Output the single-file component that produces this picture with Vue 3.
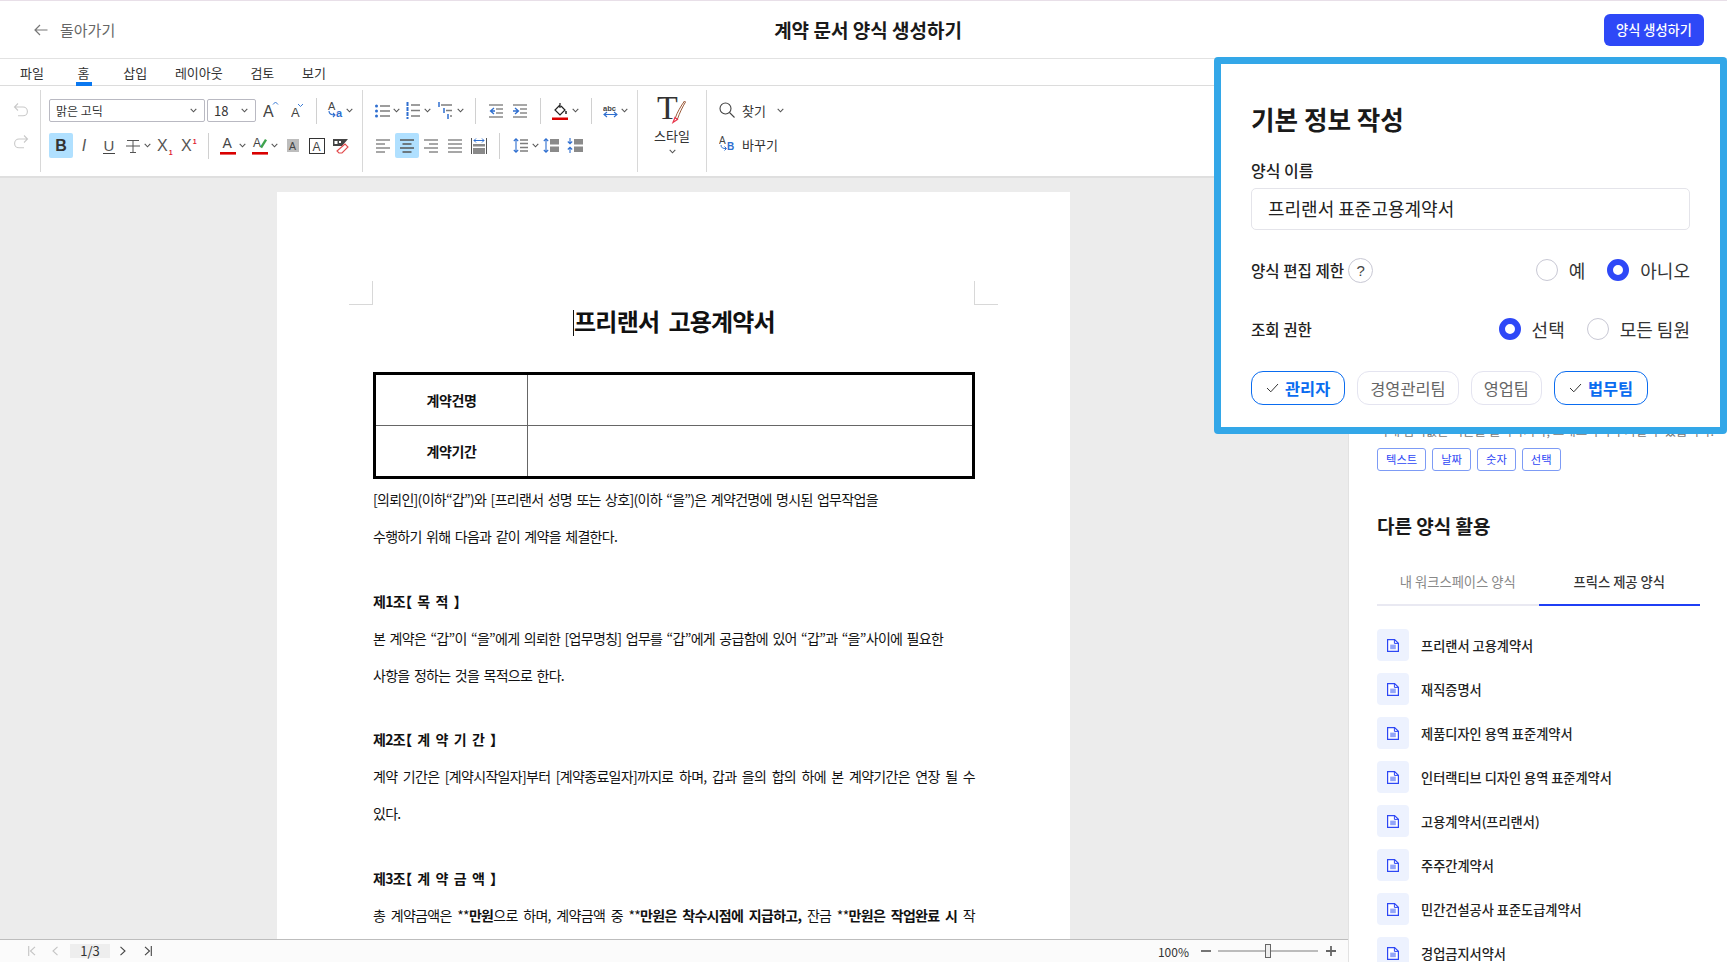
<script setup>
const templates = [
  '프리랜서 고용계약서',
  '재직증명서',
  '제품디자인 용역 표준계약서',
  '인터랙티브 디자인 용역 표준계약서',
  '고용계약서(프리랜서)',
  '주주간계약서',
  '민간건설공사 표준도급계약서',
  '경업금지서약서',
]
</script>

<template>
  <div class="app">
    <svg class="defs" width="0" height="0">
      <symbol id="chev" viewBox="0 0 7 5"><path d="M.7.8 3.5 3.8 6.3.8" fill="none" stroke="#555" stroke-width="1.1" /></symbol>
      <symbol id="file" viewBox="0 0 12 13">
        <path d="M.6.6H7.6L11.4 4.2V12.4H.6Z" fill="#fff" stroke="#2d47f5" stroke-width="1.2" />
        <path d="M7.4.8V4.4H11" fill="none" stroke="#2d47f5" stroke-width="1" />
        <rect x="3.2" y="5.6" width="5.6" height="4.6" fill="#93a5f8" />
      </symbol>
    </svg>

    <header class="topbar">
      <a class="back">
        <svg width="14" height="12" viewBox="0 0 14 12"><path d="M6 1 1 6l5 5M1 6h12.5" fill="none" stroke="#777" stroke-width="1.2" /></svg>
        <span>돌아가기</span>
      </a>
      <h1>계약 문서 양식 생성하기</h1>
      <button class="create">양식 생성하기</button>
    </header>

    <div class="body">
      <section class="editor">
        <nav class="menu">
          <span>파일</span>
          <span class="on">홈</span>
          <span>삽입</span>
          <span>레이아웃</span>
          <span>검토</span>
          <span>보기</span>
        </nav>

        <div class="toolbar">
          <div class="sec sec-undo">
            <div class="row">
              <svg width="16" height="15" viewBox="0 0 16 15"><path d="M5 1.500 1.500 5 5 8.500M1.500 5H10a4.400 4.400 0 0 1 0 8.800H5" fill="none" stroke="#c9c9c9" stroke-width="1.100" /></svg>
            </div>
            <div class="row">
              <svg width="16" height="15" viewBox="0 0 16 15"><path d="M11 1.500 14.500 5 11 8.500M14.500 5H6a4.400 4.400 0 0 0 0 8.800h5" fill="none" stroke="#c9c9c9" stroke-width="1.100" /></svg>
            </div>
          </div>

          <div class="sec sec-font">
            <div class="row">
              <div class="select font-sel"><span>맑은 고딕</span><svg width="7" height="5"><use href="#chev" /></svg></div>
              <div class="select size-sel"><span>18</span><svg width="7" height="5"><use href="#chev" /></svg></div>
              <svg class="ml7" width="16" height="22" viewBox="0 0 16 22"><text x="0" y="17" class="ic-a" font-size="16">A</text><path d="M10 4.500 12.500 2 15 4.500" fill="none" stroke="#3a7bd5" stroke-width="1" /></svg>
              <svg class="ml12" width="13" height="22" viewBox="0 0 13 22"><text x="0" y="17" class="ic-a" font-size="13">A</text><path d="M7 4 9.500 6.500 12 4" fill="none" stroke="#3a7bd5" stroke-width="1" /></svg>
              <i class="sep ml12"></i>
              <svg class="ml8" width="20" height="21" viewBox="0 0 20 21"><text x="3" y="9.500" class="ic-a" font-size="11">A</text><text x="11" y="17" class="ic-b" font-size="11">a</text><path d="M4 11c0 3 2 4 6 4M8 13l2 2-2 2" fill="none" stroke="#2f6fd0" stroke-width="1.100" /></svg>
              <svg class="ml1" width="7" height="5"><use href="#chev" /></svg>
            </div>
            <div class="row">
              <span class="toggle bold">B</span>
              <span class="glyph ital ml5">I</span>
              <span class="glyph under ml13">U</span>
              <svg class="ml11" width="14" height="14" viewBox="0 0 14 14"><path d="M1 1.500h12M7 1.500v12M4 13.500h6M0 7h14" fill="none" stroke="#555" stroke-width="1" /></svg>
              <svg class="ml4" width="7" height="5"><use href="#chev" /></svg>
              <span class="glyph xs ml6">X<sub>1</sub></span>
              <span class="glyph xs ml9">X<sup>1</sup></span>
              <i class="sep ml12"></i>
              <svg class="ml11" width="16" height="21" viewBox="0 0 16 21"><text x="2.500" y="13" class="ic-a" font-size="14">A</text><rect y="17" width="16" height="2.600" fill="#d90000" /></svg>
              <svg class="ml3" width="7" height="5"><use href="#chev" /></svg>
              <svg class="ml6" width="16" height="21" viewBox="0 0 16 21"><text x="1" y="12" class="ic-a" font-size="12">A</text><path d="M8 12 13 4l2 1.300-5 8Z" fill="#3fa34d" /><rect y="17" width="16" height="2.600" fill="#d90000" /></svg>
              <svg class="ml3" width="7" height="5"><use href="#chev" /></svg>
              <svg class="ml9" width="12" height="14" viewBox="0 0 12 14"><rect width="12" height="13" fill="#bdbdbd" /><text x="2" y="11" class="ic-a" font-size="10.500">A</text></svg>
              <svg class="ml10" width="16" height="16" viewBox="0 0 16 16"><rect x=".5" y=".5" width="15" height="15" fill="none" stroke="#333" /><text x="3.500" y="12.500" class="ic-a" font-size="12">A</text></svg>
              <svg class="ml8" width="16" height="16" viewBox="0 0 16 16"><path d="M0 1h15L9 8H0Z" fill="#444" /><rect x="1.500" y="3" width="3" height="3" fill="#fff" /><rect x="6" y="3" width="2" height="2" fill="#fff" /><path d="M4 13 12 6l3 3-6 6H6Z" fill="#fff" stroke="#e2494b" stroke-width="1.100" /></svg>
            </div>
          </div>

          <div class="sec sec-para">
            <div class="row">
              <svg width="15" height="14" viewBox="0 0 15 14"><g fill="#2f6fd0"><circle cx="1.500" cy="2" r="1.500" /><circle cx="1.500" cy="7" r="1.500" /><circle cx="1.500" cy="12" r="1.500" /></g><path d="M5 2h10M5 7h10M5 12h10" stroke="#7d7d7d" stroke-width="1.600" /></svg>
              <svg class="ml3" width="7" height="5"><use href="#chev" /></svg>
              <svg class="ml6" width="14" height="17" viewBox="0 0 14 17"><path d="M1.500 0v17" stroke="#2f6fd0" stroke-width="2" stroke-dasharray="4 1" /><path d="M5 3h9M5 8.500h9M5 14h9" stroke="#7d7d7d" stroke-width="1.600" /></svg>
              <svg class="ml4" width="7" height="5"><use href="#chev" /></svg>
              <svg class="ml7" width="14" height="17" viewBox="0 0 14 17"><path d="M1 0v5M6 6v5M10 12v5" stroke="#2f6fd0" stroke-width="1.500" /><path d="M3 3h11M8 8.500h6M12 14h2" stroke="#7d7d7d" stroke-width="1.600" /></svg>
              <svg class="ml5" width="7" height="5"><use href="#chev" /></svg>
              <i class="sep ml11"></i>
              <svg class="ml13" width="14" height="14" viewBox="0 0 14 14"><path d="M0 1h14M7 5h7M7 9h7M0 13h14" stroke="#8a8a8a" stroke-width="1.500" /><path d="M5 4 1.500 7 5 10M1.500 7H6" fill="none" stroke="#2f6fd0" stroke-width="1.300" /></svg>
              <svg class="ml10" width="14" height="14" viewBox="0 0 14 14"><path d="M0 1h14M7 5h7M7 9h7M0 13h14" stroke="#8a8a8a" stroke-width="1.500" /><path d="M2 4 5.500 7 2 10M0 7h5.500" fill="none" stroke="#2f6fd0" stroke-width="1.300" /></svg>
              <i class="sep ml13"></i>
              <svg class="ml11" width="16" height="18" viewBox="0 0 16 18"><path d="M8 1v5M8 3 3 8l5 5 5-5-4-4" fill="none" stroke="#222" stroke-width="1.200" /><path d="M14 9v3" stroke="#222" stroke-width="1.500" /><rect y="15.500" width="16" height="2.500" fill="#d90000" /></svg>
              <svg class="ml4" width="7" height="5"><use href="#chev" /></svg>
              <i class="sep ml12"></i>
              <svg class="ml11" width="15" height="17" viewBox="0 -2 15 17"><text x="0" y="6.500" class="ic-c" font-size="7.500">abc</text><path d="M1 10.500h13M4 8 1 10.500 4 13M11 8l3 2.500L11 13" fill="none" stroke="#2f6fd0" stroke-width="1.100" /></svg>
              <svg class="ml3" width="7" height="5"><use href="#chev" /></svg>
            </div>
            <div class="row row-align">
              <svg width="14" height="14" viewBox="0 0 14 14"><path d="M0 1h14M0 5h9M0 9h14M0 13h9" stroke="#8a8a8a" stroke-width="1.500" /></svg>
              <span class="toggle ml5"><svg width="14" height="14" viewBox="0 0 14 14"><path d="M0 1h14M2.500 5h9M0 9h14M2.500 13h9" stroke="#555" stroke-width="1.500" /></svg></span>
              <svg class="ml5" width="14" height="14" viewBox="0 0 14 14"><path d="M0 1h14M5 5h9M0 9h14M5 13h9" stroke="#8a8a8a" stroke-width="1.500" /></svg>
              <svg class="ml10" width="14" height="14" viewBox="0 0 14 14"><path d="M0 1h14M0 5h14M0 9h14M0 13h14" stroke="#8a8a8a" stroke-width="1.500" /></svg>
              <svg class="ml9" width="16" height="16" viewBox="0 0 16 16"><path d="M.5 0v16M15.500 0v16" stroke="#555" /><path d="M3 2.500h10M5 .5l-2 2 2 2M11 .5l2 2-2 2" fill="none" stroke="#2f6fd0" /><rect x="2" y="6" width="12" height="2.500" fill="#8a8a8a" /><rect x="2" y="10" width="12" height="6" fill="#8a8a8a" /></svg>
              <i class="sep ml12"></i>
              <svg class="ml13" width="15" height="15" viewBox="0 0 15 15"><path d="M3 1v13M.8 3 3 .8 5.200 3M.8 12 3 14.200 5.200 12" fill="none" stroke="#2f6fd0" stroke-width="1.100" /><path d="M7 2h8M7 5.500h8M7 9.500h8M7 13h8" stroke="#7d7d7d" stroke-width="1.500" /></svg>
              <svg class="ml4" width="7" height="5"><use href="#chev" /></svg>
              <svg class="ml4" width="16" height="15" viewBox="0 0 16 15"><path d="M3 1v13M.8 3 3 .8 5.200 3M.8 12 3 14.200 5.200 12" fill="none" stroke="#2f6fd0" stroke-width="1.100" /><rect x="7" y="1" width="9" height="5.500" fill="#8a8a8a" /><rect x="7" y="8.500" width="9" height="5.500" fill="#8a8a8a" /></svg>
              <svg class="ml8" width="16" height="15" viewBox="0 0 16 15"><path d="M3 0v5.500M.8 3.500 3 5.700 5.200 3.500M3 15V9.500M.8 11.500 3 9.300 5.200 11.500" fill="none" stroke="#2f6fd0" stroke-width="1.100" /><rect x="7" y="1" width="9" height="5.500" fill="#8a8a8a" /><rect x="7" y="8.500" width="9" height="5.500" fill="#8a8a8a" /></svg>
            </div>
          </div>

          <div class="sec sec-style">
            <svg width="32" height="38" viewBox="0 0 32 38">
              <text x="1" y="29" class="ic-t" font-size="34">T</text>
              <path d="M29.500 12c-3 5-6 11-8 17l-2.200-1C21 22.500 25 16 28.500 11Z" fill="#fff" stroke="#9b5a3a" stroke-width="1" />
              <path d="M19 27.500 17 32.500 21.500 29.500Z" fill="#fff" stroke="#e8354a" stroke-width="1.200" />
            </svg>
            <span class="style-label">스타일</span>
            <svg width="7" height="5"><use href="#chev" /></svg>
          </div>

          <div class="sec sec-find">
            <div class="row">
              <svg width="16" height="16" viewBox="0 0 16 16"><circle cx="6.500" cy="6.500" r="5.500" fill="none" stroke="#444" stroke-width="1.100" /><path d="m10.500 10.500 5 5" stroke="#444" stroke-width="1.100" /></svg>
              <span class="find-label">찾기</span>
              <svg class="ml11" width="7" height="5"><use href="#chev" /></svg>
            </div>
            <div class="row">
              <svg width="16" height="18" viewBox="0 0 16 18"><text x="0" y="9" class="ic-a" font-size="10">A</text><text x="8" y="15" class="ic-b" font-size="10">B</text><path d="M2 10c0 3 2 3.500 5 3.500M5.500 11.500l2 2-2 2" fill="none" stroke="#2f6fd0" stroke-width="1" /></svg>
              <span class="find-label">바꾸기</span>
            </div>
          </div>
        </div>

        <div class="canvas">
          <article class="page">
            <i class="crop crop-l"></i>
            <i class="crop crop-r"></i>
            <h2><i class="caret"></i>프리랜서&nbsp; 고용계약서</h2>
            <div class="doc-table">
              <div class="dt-head">계약건명</div>
              <div class="dt-cell"></div>
              <div class="dt-head">계약기간</div>
              <div class="dt-cell"></div>
            </div>
            <p class="first">[의뢰인](이하“갑”)와 [프리랜서 성명 또는 상호](이하 “을”)은 계약건명에 명시된 업무작업을</p>
            <p>수행하기 위해 다음과 같이 계약을 체결한다.</p>
            <p class="clause">제1조【 목 적 】</p>
            <p>본 계약은 “갑”이 “을”에게 의뢰한 [업무명칭] 업무를 “갑”에게 공급함에 있어 “갑”과 “을”사이에 필요한</p>
            <p>사항을 정하는 것을 목적으로 한다.</p>
            <p class="clause">제2조【 계 약 기 간 】</p>
            <p class="just">계약 기간은 [계약시작일자]부터 [계약종료일자]까지로 하며, 갑과 을의 합의 하에 본 계약기간은 연장 될 수</p>
            <p>있다.</p>
            <p class="clause">제3조【 계 약 금 액 】</p>
            <p class="just">총 계약금액은 **<b>만원</b>으로 하며, 계약금액 중 **<b>만원은 착수시점에 지급하고,</b> 잔금 **<b>만원은 작업완료 시</b> 작</p>
          </article>
        </div>

        <footer class="status">
          <div class="pager">
            <svg width="8" height="10" viewBox="0 0 8 10"><path d="M.7 0v10M7 .8 2.500 5 7 9.200" fill="none" stroke="#c4c4c4" stroke-width="1.100" /></svg>
            <svg class="ml16" width="6" height="10" viewBox="0 0 6 10"><path d="M5.500.8 1 5l4.500 4.200" fill="none" stroke="#c4c4c4" stroke-width="1.100" /></svg>
            <span class="page-no">1/3</span>
            <svg class="ml10" width="6" height="10" viewBox="0 0 6 10"><path d="M.5.800 5 5 .5 9.200" fill="none" stroke="#444" stroke-width="1.100" /></svg>
            <svg class="ml18" width="8" height="10" viewBox="0 0 8 10"><path d="M7.300 0v10M1 .8 5.500 5 1 9.200" fill="none" stroke="#444" stroke-width="1.100" /></svg>
          </div>
          <div class="zoom">
            <span>100%</span>
            <svg class="ml12" width="10" height="10" viewBox="0 0 10 10"><path d="M0 5h10" stroke="#666" stroke-width="1.800" /></svg>
            <div class="slider"><i></i></div>
            <svg class="ml8" width="10" height="10" viewBox="0 0 10 10"><path d="M0 5h10M5 0v10" stroke="#666" stroke-width="1.800" /></svg>
          </div>
        </footer>
      </section>

      <aside class="side">
        <p class="hint">아래 입력값은 버튼을 클릭하거나, 드래그하여 추가할 수 있습니다.</p>
        <div class="tags">
          <span>텍스트</span>
          <span>날짜</span>
          <span>숫자</span>
          <span>선택</span>
        </div>
        <h3>다른 양식 활용</h3>
        <div class="tabs">
          <span>내 워크스페이스 양식</span>
          <span class="on">프릭스 제공 양식</span>
        </div>
        <ul class="list">
          <li v-for="t in templates" :key="t">
            <span class="doc-ic"><svg width="12" height="13"><use href="#file" /></svg></span>
            <span>{{ t }}</span>
          </li>
        </ul>
      </aside>
    </div>

    <div class="overlay">
      <h2>기본 정보 작성</h2>
      <label class="name-label">양식 이름</label>
      <div class="name-input">프리랜서 표준고용계약서</div>

      <div class="opt-row opt-edit">
        <div class="opt-label">양식 편집 제한 <span class="help">?</span></div>
        <div class="radios">
          <span class="radio"></span><span class="radio-text">예</span>
          <span class="radio on"></span><span class="radio-text">아니오</span>
        </div>
      </div>

      <div class="opt-row opt-view">
        <div class="opt-label">조회 권한</div>
        <div class="radios">
          <span class="radio on"></span><span class="radio-text">선택</span>
          <span class="radio"></span><span class="radio-text">모든 팀원</span>
        </div>
      </div>

      <div class="chips">
        <span class="chip on">
          <svg width="13" height="10" viewBox="0 0 13 10"><path d="m1 5 3.800 3.800L12 1" fill="none" stroke="#333" stroke-width="1" /></svg>
          관리자
        </span>
        <span class="chip">경영관리팀</span>
        <span class="chip">영업팀</span>
        <span class="chip on">
          <svg width="13" height="10" viewBox="0 0 13 10"><path d="m1 5 3.800 3.800L12 1" fill="none" stroke="#333" stroke-width="1" /></svg>
          법무팀
        </span>
      </div>
    </div>
  </div>
</template>

<style scoped>
.app {
  position: relative;
  width: 1727px;
  height: 962px;
  overflow: hidden;
  display: flex;
  flex-direction: column;
  background: #fff;
  color: #222;
  font-family: "Noto Sans CJK KR", "Noto Sans", sans-serif;
}

.defs {
  position: absolute;
}

.topbar {
  flex: none;
  height: 59px;
  box-sizing: border-box;
  border-top: 1px solid #e8dfe8;
  border-bottom: 1px solid #e2e2e2;
  padding: 0 23px 0 34px;
  display: flex;
  align-items: center;
  justify-content: space-between;
  position: relative;
}

.back {
  display: flex;
  align-items: center;
  gap: 12px;
  font-size: 15px;
  color: #666;
}

.topbar h1 {
  position: absolute;
  left: 9px;
  right: 0;
  top: 12px;
  margin: 0;
  text-align: center;
  font-size: 19px;
  line-height: 34px;
  font-weight: 700;
  color: #1a1a1a;
  pointer-events: none;
}

.create {
  width: 100px;
  height: 32px;
  border: none;
  border-radius: 6px;
  background: #2e48f7;
  color: #fff;
  font: 500 13.2px "Noto Sans CJK KR", sans-serif;
}

.body {
  flex: 1;
  min-height: 0;
  display: flex;
}

.editor {
  width: 1349px;
  box-sizing: border-box;
  border-right: 1px solid #e2e2e2;
  display: flex;
  flex-direction: column;
}

.menu {
  flex: none;
  height: 27px;
  box-sizing: border-box;
  border-bottom: 1px solid #dcdcdc;
  padding: 1px 0 0 20px;
  display: flex;
  align-items: center;
  gap: 27.7px;
  font-size: 13px;
  color: #333;
}

.menu .on {
  position: relative;
  padding: 0 6px;
}

.menu .on::after {
  content: "";
  position: absolute;
  left: 4px;
  right: 4px;
  bottom: -4px;
  height: 4px;
  background: #0a78f0;
}

.toolbar {
  flex: none;
  height: 92px;
  box-sizing: border-box;
  border-bottom: 2px solid #dfdfdf;
  padding-top: 4px;
  display: flex;
}

.sec {
  height: 82px;
  box-sizing: border-box;
  border-right: 1px solid #d8d8d8;
}

.row {
  height: 35px;
  display: flex;
  align-items: center;
}

.sec > .row:first-child {
  margin-top: 3px;
}

.sec-undo {
  width: 41px;
  padding-left: 13px;
}

.sec-undo .row {
  height: 32px;
}

.sec > .row:first-child:only-of-type {
  margin-top: 3px;
}

.sec-font {
  width: 322px;
  padding-left: 8px;
}

.sec-para {
  width: 275px;
  padding-left: 12px;
}

.row-align {
  margin-left: 1px;
}

.sec-style {
  width: 69px;
  display: flex;
  flex-direction: column;
  align-items: center;
}

.style-label {
  font-size: 13px;
  line-height: 16px;
  margin: 0 0 5px;
  color: #333;
}

.sec-find {
  border-right: none;
  padding-left: 12px;
}

.sec-find .row {
  height: 34px;
}

.find-label {
  margin-left: 7px;
  font-size: 13px;
  width: 24px;
  white-space: nowrap;
  color: #333;
}

.select {
  height: 23px;
  box-sizing: border-box;
  border: 1px solid #b9b9c2;
  border-radius: 2px;
  padding: 0 7px 0 6px;
  display: flex;
  align-items: center;
  justify-content: space-between;
  font-size: 12px;
  color: #333;
}

.font-sel {
  width: 156px;
}

.size-sel {
  width: 49px;
  margin-left: 2px;
  font-size: 13px;
}

.sep {
  flex: none;
  display: block;
  width: 1px;
  height: 26px;
  background: #d0d0d0;
}

.toggle {
  flex: none;
  width: 24px;
  height: 25px;
  border-radius: 2px;
  background: #b0e0ff;
  display: flex;
  align-items: center;
  justify-content: center;
}

.bold {
  font: 700 16px "Liberation Sans", sans-serif;
  color: #333;
}

.glyph {
  font-family: "Liberation Sans", sans-serif;
  font-size: 16px;
  color: #555;
  line-height: 18px;
}

.ital {
  font-family: "Liberation Sans", sans-serif;
  font-style: italic;
  width: 12px;
  text-align: center;
}

.under {
  width: 12px;
  text-align: center;
  border-bottom: 1px solid #444;
  line-height: 15px;
  font-size: 15px;
}

.xs {
  width: 15px;
  white-space: nowrap;
}

.xs sub,
.xs sup {
  font-size: 7px;
  font-weight: 700;
  color: #e01b2f;
  line-height: 0;
  margin-left: 1px;
}

.ic-a {
  fill: #444;
  font-family: "Liberation Sans", sans-serif;
}

.ic-b {
  fill: #2f6fd0;
  font-family: "Liberation Sans", sans-serif;
  font-weight: 700;
}

.ic-c {
  fill: #444;
  font-family: "Liberation Sans", sans-serif;
  font-weight: 700;
}

.ic-t {
  fill: #333;
  font-family: "Liberation Serif", serif;
}

.ml1 { margin-left: 1px; }
.ml3 { margin-left: 3px; }
.ml4 { margin-left: 4px; }
.ml5 { margin-left: 5px; }
.ml6 { margin-left: 6px; }
.ml7 { margin-left: 7px; }
.ml8 { margin-left: 8px; }
.ml9 { margin-left: 9px; }
.ml10 { margin-left: 10px; }
.ml11 { margin-left: 11px; }
.ml12 { margin-left: 12px; }
.ml13 { margin-left: 13px; }
.ml16 { margin-left: 16px; }
.ml18 { margin-left: 18px; }

.canvas {
  flex: 1;
  min-height: 0;
  overflow: hidden;
  background: #ececec;
  padding: 14px 0 0 277px;
}

.page {
  position: relative;
  width: 793px;
  height: 1100px;
  box-sizing: border-box;
  background: #fff;
  padding: 108px 95px 0 96px;
  font-size: 14px;
  color: #111;
}

.crop {
  position: absolute;
  top: 89px;
  width: 23px;
  height: 23px;
  border-bottom: 1px solid #d8d8d8;
}

.crop-l {
  left: 72px;
  border-right: 1px solid #d8d8d8;
}

.crop-r {
  right: 72px;
  border-left: 1px solid #d8d8d8;
}

.page h2 {
  margin: 0;
  text-align: center;
  font-size: 24px;
  line-height: 42px;
  font-weight: 700;
  letter-spacing: -.8px;
  position: relative;
}

.caret {
  display: inline-block;
  width: 1px;
  height: 26px;
  background: #111;
  vertical-align: -5px;
}

.doc-table {
  margin-top: 30px;
  height: 107px;
  box-sizing: border-box;
  border: 3px solid #000;
  display: grid;
  grid-template-columns: 152px 1fr;
  grid-template-rows: 51px 1fr;
}

.dt-head {
  display: flex;
  align-items: center;
  justify-content: center;
  font-weight: 700;
  letter-spacing: -.4px;
  border-right: 1px solid #666;
}

.dt-head:first-child,
.dt-cell:nth-child(2) {
  border-bottom: 1px solid #666;
}

.page p {
  margin: 0;
  line-height: 37px;
  letter-spacing: -.7px;
  word-spacing: 1.9px;
  white-space: nowrap;
}

.page p.first {
  margin-top: 2px;
}

.page p.clause {
  margin-top: 27.5px;
  font-weight: 700;
  font-feature-settings: "palt";
  word-spacing: 3.6px;
}

.page p.just {
  text-align-last: justify;
  white-space: normal;
}

.page b {
  font-weight: 700;
}

.status {
  flex: none;
  height: 23px;
  box-sizing: border-box;
  border-top: 1px solid #bdbdbd;
  background: #fbfbfb;
  display: flex;
  align-items: center;
  justify-content: space-between;
  padding: 0 12px 0 28px;
}

.pager,
.zoom {
  display: flex;
  align-items: center;
}

.page-no {
  width: 40px;
  height: 14px;
  margin-left: 12px;
  background: #eeeeee;
  text-align: center;
  font-size: 13px;
  line-height: 14px;
  color: #333;
}

.zoom span {
  font-size: 12px;
  color: #333;
}

.slider {
  position: relative;
  width: 100px;
  height: 2px;
  margin-left: 7px;
  background: #bcbcbc;
}

.slider i {
  position: absolute;
  left: 47px;
  top: -6px;
  width: 6px;
  height: 14px;
  box-sizing: border-box;
  border: 1px solid #666;
  background: #eee;
}

.side {
  flex: 1;
  padding: 363px 27px 0 28px;
  min-width: 0;
}

.hint {
  margin: 0;
  font-size: 12.5px;
  line-height: 18px;
  color: #777;
  white-space: nowrap;
}

.tags {
  margin-top: 8px;
  display: flex;
  gap: 6px;
}

.tags span {
  height: 23px;
  box-sizing: border-box;
  padding: 0 8px;
  border: 1px solid #7d9bf5;
  border-radius: 3px;
  font-size: 11.3px;
  line-height: 21px;
  color: #2d47f5;
}

.side h3 {
  margin: 40px 0 0;
  font-size: 19px;
  line-height: 30px;
  font-weight: 700;
  color: #1a1a1a;
}

.tabs {
  margin-top: 20px;
  display: flex;
  height: 45px;
  box-sizing: border-box;
  font-size: 13.3px;
  text-align: center;
}

.tabs span {
  flex: 1;
  line-height: 41px;
  border-bottom: 2px solid #e9e9f2;
  color: #888;
}

.tabs .on {
  color: #333;
  font-weight: 500;
  border-bottom-color: #1f3ff5;
}

.list {
  list-style: none;
  margin: 23px 0 0;
  padding: 0;
}

.list li {
  height: 32px;
  margin-bottom: 12px;
  display: flex;
  align-items: center;
  gap: 12px;
  font-size: 13.2px;
  font-weight: 500;
  color: #222;
}

.doc-ic {
  width: 32px;
  height: 32px;
  border-radius: 4px;
  background: #edf2fe;
  display: flex;
  align-items: center;
  justify-content: center;
}

.overlay {
  position: absolute;
  left: 1214px;
  top: 57px;
  width: 513px;
  height: 377px;
  box-sizing: border-box;
  border: 7px solid #33a7e8;
  border-radius: 4px;
  background: #fff;
  padding: 0 30px;
}

.overlay h2 {
  margin: 37px 0 0;
  font-size: 25.6px;
  line-height: 36px;
  font-weight: 700;
  color: #1a1a1a;
}

.name-label {
  display: block;
  margin-top: 21px;
  font-size: 16px;
  line-height: 24px;
  font-weight: 500;
}

.name-input {
  margin-top: 6px;
  height: 42px;
  box-sizing: border-box;
  border: 1px solid #e4e4ea;
  border-radius: 5px;
  padding-left: 16px;
  font-size: 18px;
  line-height: 38px;
  color: #222;
}

.opt-row {
  display: flex;
  align-items: center;
  justify-content: space-between;
  height: 24px;
  font-size: 16px;
}

.opt-edit {
  margin-top: 28px;
}

.opt-view {
  margin-top: 35px;
}

.opt-label {
  display: flex;
  align-items: center;
  gap: 4px;
  font-size: 15.6px;
  font-weight: 500;
}

.help {
  width: 25px;
  height: 25px;
  box-sizing: border-box;
  border: 1px solid #c8c8d4;
  border-radius: 50%;
  text-align: center;
  font: 15px/23px "Liberation Sans", sans-serif;
  color: #444;
}

.radios {
  display: flex;
  align-items: center;
}

.radio {
  width: 22px;
  height: 22px;
  box-sizing: border-box;
  border: 1px solid #c8c8d4;
  border-radius: 50%;
  background: #fff;
  margin-left: 22px;
}

.radio.on {
  border: 6px solid #2e48f7;
}

.radio-text {
  margin-left: 11px;
  font-size: 18px;
  color: #333;
}

.chips {
  margin-top: 30px;
  display: flex;
  gap: 12px;
}

.chip {
  height: 34px;
  box-sizing: border-box;
  padding: 0 12px;
  border: 1px solid #e4e4f0;
  border-radius: 12px;
  display: flex;
  align-items: center;
  gap: 6px;
  font-size: 16.4px;
  color: #666;
}

.chip.on {
  padding: 0 14px;
  border-color: #0a6cf0;
  color: #0a6cf0;
  font-weight: 700;
}
</style>

<style>
html,
body {
  margin: 0;
  overflow: hidden;
}
</style>
